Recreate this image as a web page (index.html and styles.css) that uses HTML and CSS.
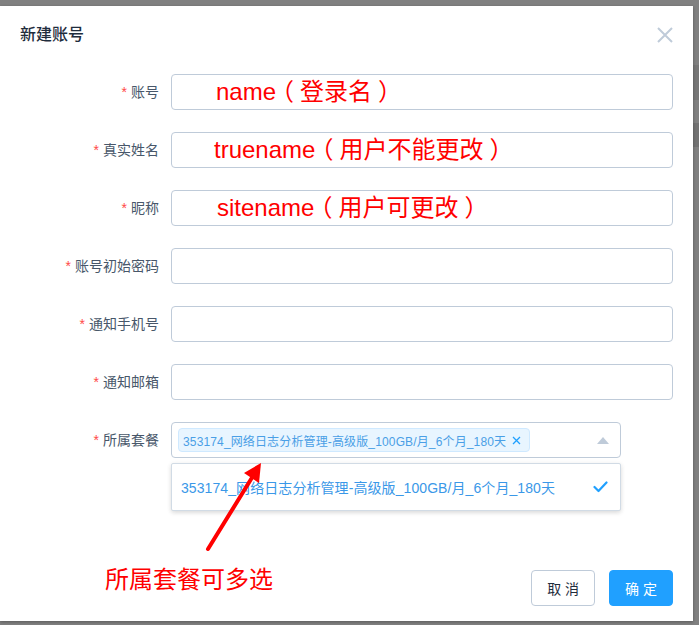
FILE: index.html
```html
<!DOCTYPE html>
<html lang="zh-CN">
<head>
<meta charset="utf-8">
<title>新建账号</title>
<link rel="stylesheet" href="styles.css">
</head>
<body>
<div class="dialog">
  <div class="dialog-header">
    <span class="dialog-title">新建账号</span>
    <svg class="dialog-close" width="16" height="16" viewBox="0 0 16 16"><path d="M1 1 L15 15 M15 1 L1 15" stroke="#bfcbd9" stroke-width="2" fill="none"/></svg>
  </div>
  <div class="dialog-body">
    <div class="form-item">
      <label class="form-label"><span class="req">*</span>账号</label>
      <div class="input"><span class="note note-1">name<span class="paren">（</span>登录名<span class="paren">）</span></span></div>
    </div>
    <div class="form-item">
      <label class="form-label"><span class="req">*</span>真实姓名</label>
      <div class="input"><span class="note note-2">truename<span class="paren">（</span>用户不能更改<span class="paren">）</span></span></div>
    </div>
    <div class="form-item">
      <label class="form-label"><span class="req">*</span>昵称</label>
      <div class="input"><span class="note note-3">sitename<span class="paren">（</span>用户可更改<span class="paren">）</span></span></div>
    </div>
    <div class="form-item">
      <label class="form-label"><span class="req">*</span>账号初始密码</label>
      <div class="input"></div>
    </div>
    <div class="form-item">
      <label class="form-label"><span class="req">*</span>通知手机号</label>
      <div class="input"></div>
    </div>
    <div class="form-item">
      <label class="form-label"><span class="req">*</span>通知邮箱</label>
      <div class="input"></div>
    </div>
    <div class="form-item">
      <label class="form-label"><span class="req">*</span>所属套餐</label>
      <div class="select">
        <div class="select-box">
          <span class="tag">353174_网络日志分析管理-高级版_100GB/月_6个月_180天<svg class="tag-close" width="9" height="9" viewBox="0 0 9 9"><path d="M1 1 L8 8 M8 1 L1 8" stroke="#20a0ff" stroke-width="1.3" fill="none"/></svg></span>
          <svg class="caret" width="12" height="7" viewBox="0 0 12 7"><path d="M0 7 L6 0 L12 7 Z" fill="#bfcbd9"/></svg>
        </div>
        <div class="dropdown">
          <div class="option">
            <span>353174_网络日志分析管理-高级版_100GB/月_6个月_180天</span>
            <svg width="15" height="12" viewBox="0 0 15 12"><path d="M1.5 6 L5.5 10 L13.5 1.5" stroke="#20a0ff" stroke-width="2.2" fill="none" stroke-linecap="round" stroke-linejoin="round"/></svg>
          </div>
        </div>
      </div>
    </div>
  </div>
  <div class="dialog-footer">
    <button class="btn">取 消</button>
    <button class="btn btn-primary">确 定</button>
  </div>
  <svg class="arrow" width="80" height="105" viewBox="0 0 80 105"><path d="M8 99 L53 26" stroke="#ff0000" stroke-width="4" stroke-linecap="round"/><path d="M61 13 L44 23 L59 33 Z" fill="#ff0000"/></svg>
  <span class="bottom-note">所属套餐可多选</span>
</div>
</body>
</html>
```
FILE: styles.css
```css
html, body {
  margin: 0;
  padding: 0;
}
body {
  width: 699px;
  height: 625px;
  overflow: hidden;
  background: linear-gradient(to bottom, #808080 0, #808080 65px, #767676 65px, #767676 100px, #808080 100px, #808080 123px, #727272 123px, #727272 147px, #808080 147px);
  font-family: "Liberation Sans", "Noto Sans CJK SC", sans-serif;
}
.dialog {
  position: relative;
  margin-top: 6px;
  width: 693px;
  height: 615px;
  background: #fff;
  box-shadow: 0 1px 3px rgba(0, 0, 0, 0.3);
  display: flex;
  flex-direction: column;
  box-sizing: border-box;
}
.dialog-header {
  padding: 20px 20px 0;
  height: 18px;
  display: flex;
  justify-content: space-between;
  align-items: center;
}
.dialog-title {
  font-size: 16px;
  line-height: 18px;
  color: #1f2d3d;
  font-weight: 500;
}
.dialog-body {
  padding: 30px 20px 0;
  flex: 1;
}
.form-item {
  display: grid;
  grid-template-columns: 151px 1fr;
  margin-bottom: 22px;
  height: 36px;
}
.form-label {
  font-size: 14px;
  color: #48576a;
  text-align: right;
  padding-right: 12px;
  line-height: 36px;
}
.req {
  color: #ff4949;
  margin-right: 4px;
}
.input {
  height: 36px;
  box-sizing: border-box;
  border: 1px solid #bfcbd9;
  border-radius: 4px;
  display: flex;
  align-items: center;
}
.note {
  color: #ff0000;
  font-size: 24px;
  line-height: 30px;
  white-space: nowrap;
  margin-top: -1px;
}
.paren {
  display: inline-block;
  width: 1em;
  text-align: center;
  font-feature-settings: "halt";
}
.note-1 { padding-left: 44px; }
.note-2 { padding-left: 42px; }
.note-3 { padding-left: 45px; }
.select {
  position: relative;
  width: 450px;
}
.select-box {
  height: 36px;
  box-sizing: border-box;
  border: 1px solid #bfcbd9;
  border-radius: 4px;
  display: flex;
  align-items: center;
  justify-content: space-between;
  padding: 0 11px 0 6px;
}
.tag {
  height: 24px;
  box-sizing: border-box;
  display: inline-flex;
  align-items: center;
  gap: 6px;
  padding: 0 8px 0 4px;
  font-size: 12px;
  letter-spacing: 0.14px;
  color: #4a9fe6;
  background: #e8f5ff;
  border: 1px solid #cfe9ff;
  border-radius: 4px;
  white-space: nowrap;
}
.dropdown {
  position: absolute;
  left: 0;
  right: 0;
  top: 41px;
  background: #fff;
  border: 1px solid #d1dbe5;
  border-radius: 2px;
  box-shadow: 0 2px 4px rgba(0, 0, 0, 0.12), 0 0 6px rgba(0, 0, 0, 0.04);
  padding: 5px 0;
  z-index: 2;
}
.option {
  height: 36px;
  padding: 0 12px 0 9px;
  display: flex;
  align-items: center;
  justify-content: space-between;
  font-size: 14px;
  letter-spacing: 0.08px;
  color: #3a98e8;
  white-space: nowrap;
}
.dialog-footer {
  padding: 11px 20px 15px;
  display: flex;
  justify-content: flex-end;
  gap: 14px;
}
.btn {
  height: 36px;
  box-sizing: border-box;
  padding: 0 15px;
  font-size: 14px;
  font-family: "Liberation Sans", "Noto Sans CJK SC", sans-serif;
  border: 1px solid #bfcbd9;
  border-radius: 4px;
  background: #fff;
  color: #1f2d3d;
  margin: 0;
}
.btn-primary {
  background: #20a0ff;
  border-color: #20a0ff;
  color: #fff;
}
.arrow {
  position: absolute;
  left: 200px;
  top: 444px;
  z-index: 3;
}
.bottom-note {
  position: absolute;
  left: 105px;
  top: 560px;
  font-size: 24px;
  line-height: 28px;
  color: #ff0000;
  white-space: nowrap;
}
```
